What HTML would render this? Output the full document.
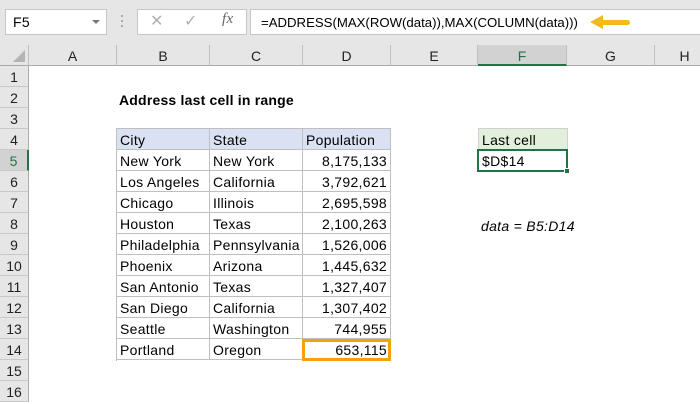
<!DOCTYPE html>
<html><head><meta charset="utf-8"><style>
*{margin:0;padding:0;box-sizing:border-box}
body{width:700px;height:400px;overflow:hidden;background:#fff;font-family:"Liberation Sans",Arial,sans-serif;font-size:14px;letter-spacing:0.3px;color:#000;position:relative}
.a{position:absolute}
.tb{left:0;top:0;width:700px;height:45px;background:#e6e6e6}
.box{background:#fff;border:1px solid #c6c6c6}
.ch{top:45px;height:21px;background:#e6e6e6;border-right:1px solid #c0c0c0;border-bottom:1px solid #ababab;text-align:center;line-height:22px;font-size:14px;color:#222;letter-spacing:0}
.rh{left:0;width:29px;height:21px;background:#e6e6e6;border-right:1px solid #ababab;border-bottom:1px solid #c8c8c8;text-align:center;line-height:23px;font-size:14px;color:#222;letter-spacing:0}
.c{height:21px;line-height:23px;padding:0 3px;white-space:nowrap;overflow:visible;border-right:1px solid #bfbfbf;border-bottom:1px solid #bfbfbf}
.r{text-align:right}
</style></head><body>
<div class="a tb"></div>
<div class="a box" style="left:5px;top:9px;width:102px;height:26px;line-height:25px;padding-left:7px;font-size:14px">F5</div>
<div class="a" style="left:92px;top:20px;width:0;height:0;border-left:4px solid transparent;border-right:4px solid transparent;border-top:4px solid #777"></div>
<div class="a" style="left:121px;top:15px;width:2px;height:2px;background:#aaa;box-shadow:0 5px 0 #aaa,0 10px 0 #aaa"></div>
<div class="a box" style="left:137px;top:9px;width:110px;height:26px"></div>
<div class="a" style="left:150px;top:11px;color:#b0b0b0;font-size:16px">✕</div>
<div class="a" style="left:184px;top:11px;color:#b0b0b0;font-size:16px">✓</div>
<div class="a" style="left:222px;top:11px;color:#666;font-family:'Liberation Serif',serif;font-style:italic;font-size:15px">fx</div>
<div class="a box" style="left:250px;top:9px;width:460px;height:26px;line-height:26px;padding-left:10px;font-size:13.2px;letter-spacing:0">=ADDRESS(MAX(ROW(data)),MAX(COLUMN(data)))</div>
<svg class="a" style="left:586px;top:13px" width="50" height="20"><path d="M4 9 L17 2 L17 16 Z" fill="#f4b821"/><rect x="14" y="7" width="30" height="5" rx="2.5" fill="#f4b821"/></svg>

<div class="a ch" style="left:0;width:29px"></div>
<div class="a" style="left:13px;top:50px;width:0;height:0;border-left:12px solid transparent;border-bottom:12px solid #b4b4b4"></div>
<div class="a ch" style="left:29px;width:88px">A</div>
<div class="a ch" style="left:117px;width:93px">B</div>
<div class="a ch" style="left:210px;width:93px">C</div>
<div class="a ch" style="left:303px;width:88px">D</div>
<div class="a ch" style="left:391px;width:87px">E</div>
<div class="a ch" style="left:478px;width:89px;background:#d2d2d2;border-bottom:2px solid #217346;color:#217346">F</div>
<div class="a ch" style="left:567px;width:88px">G</div>
<div class="a ch" style="left:655px;width:60px">H</div>

<div class="a rh" style="top:66px">1</div>
<div class="a rh" style="top:87px">2</div>
<div class="a rh" style="top:108px">3</div>
<div class="a rh" style="top:129px">4</div>
<div class="a rh" style="top:150px;background:#d2d2d2;border-right:2px solid #217346;color:#217346">5</div>
<div class="a rh" style="top:171px">6</div>
<div class="a rh" style="top:192px">7</div>
<div class="a rh" style="top:213px">8</div>
<div class="a rh" style="top:234px">9</div>
<div class="a rh" style="top:255px">10</div>
<div class="a rh" style="top:276px">11</div>
<div class="a rh" style="top:297px">12</div>
<div class="a rh" style="top:318px">13</div>
<div class="a rh" style="top:339px">14</div>
<div class="a rh" style="top:360px">15</div>
<div class="a rh" style="top:381px">16</div>

<div class="a" style="left:119px;top:89px;font-weight:bold;line-height:22px;letter-spacing:0.2px">Address last cell in range</div>

<div class="a" style="left:116px;top:128px;width:275px;height:233px;border-left:1px solid #bfbfbf;border-top:1px solid #bfbfbf"></div>
<div class="a" style="left:117px;top:129px;display:grid;grid-template-columns:93px 93px 88px">
<div class="c" style="background:#d9e1f2">City</div><div class="c" style="background:#d9e1f2">State</div><div class="c" style="background:#d9e1f2">Population</div>
<div class="c">New York</div><div class="c">New York</div><div class="c r">8,175,133</div>
<div class="c">Los Angeles</div><div class="c">California</div><div class="c r">3,792,621</div>
<div class="c">Chicago</div><div class="c">Illinois</div><div class="c r">2,695,598</div>
<div class="c">Houston</div><div class="c">Texas</div><div class="c r">2,100,263</div>
<div class="c">Philadelphia</div><div class="c">Pennsylvania</div><div class="c r">1,526,006</div>
<div class="c">Phoenix</div><div class="c">Arizona</div><div class="c r">1,445,632</div>
<div class="c">San Antonio</div><div class="c">Texas</div><div class="c r">1,327,407</div>
<div class="c">San Diego</div><div class="c">California</div><div class="c r">1,307,402</div>
<div class="c">Seattle</div><div class="c">Washington</div><div class="c r">744,955</div>
<div class="c">Portland</div><div class="c">Oregon</div><div class="c r">653,115</div>
</div>
<div class="a" style="left:302px;top:339px;width:89px;height:22px;border:3px solid #f0a30a"></div>

<div class="a" style="left:478px;top:128px;width:90px;height:22px;background:#e2efda;border:1px solid #d0d0d0;line-height:22px;padding-left:3px">Last cell</div>
<div class="a" style="left:477px;top:149px;width:91px;height:23px;border:2px solid #217346;line-height:21px;padding-left:3px">$D$14</div>
<div class="a" style="left:564px;top:168px;width:6px;height:6px;background:#217346;border:1px solid #fff"></div>
<div class="a" style="left:481px;top:215px;font-style:italic;line-height:22px">data = B5:D14</div>
</body></html>
